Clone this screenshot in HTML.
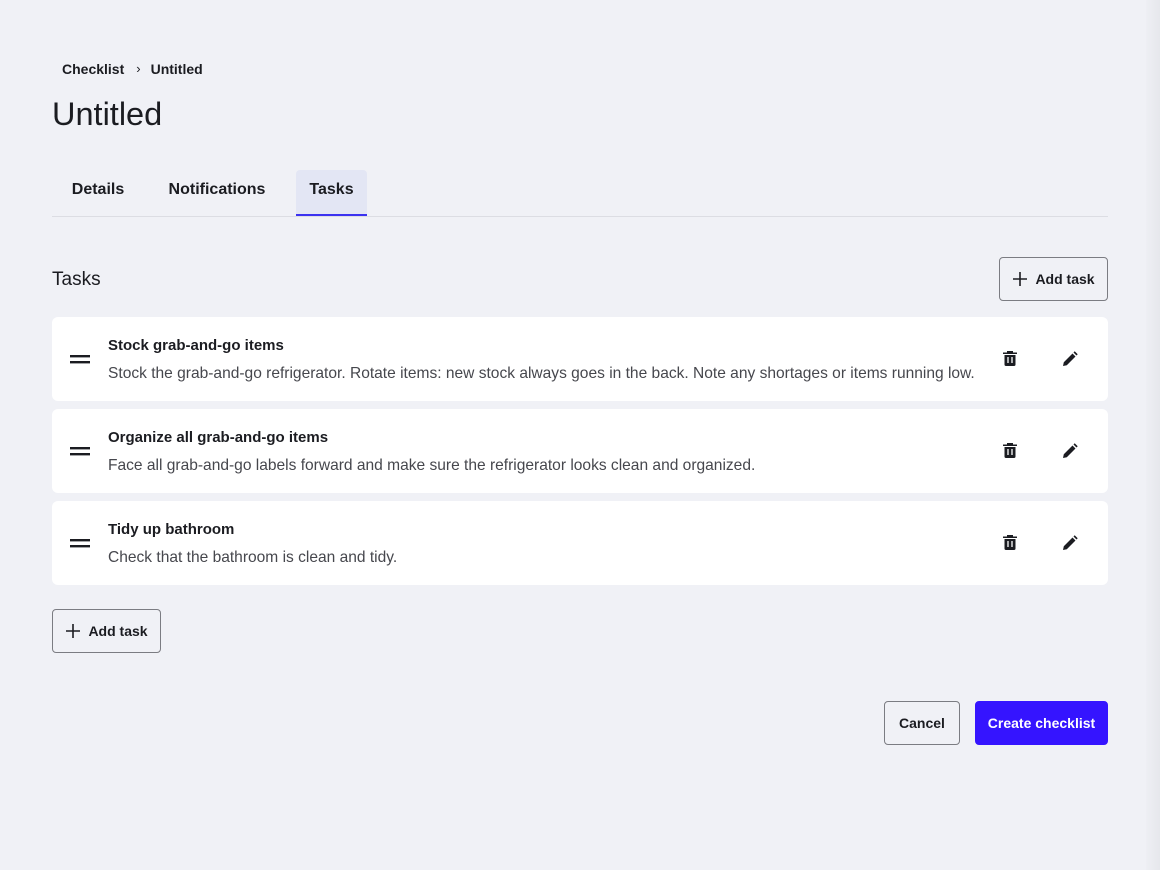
<!DOCTYPE html>
<html><head><meta charset="utf-8"><style>
*{box-sizing:border-box;margin:0;padding:0}
body{width:1160px;height:870px;background:#f0f1f6;font-family:"Liberation Sans",sans-serif;color:#1b1c21;position:relative;overflow:hidden}
.sb{position:absolute;right:0;top:0;width:14px;height:870px;background:linear-gradient(90deg,#eeeff4,#e6e7ec)}
.bc{position:absolute;left:62px;top:61px;font-size:14px;font-weight:bold;display:flex;gap:0}
.bc span.s{margin:0 10px 0 12px;font-weight:normal;font-size:13px}
h1{position:absolute;left:52px;top:96px;font-size:32.5px;font-weight:normal}
.tabs{position:absolute;left:52px;top:170px;width:1056px;height:47px;border-bottom:1px solid #dcdde3}
.tab{position:absolute;top:0;height:46px;line-height:40px;font-size:16px;font-weight:bold;text-align:center}
.tab.a{background:#e3e6f4;border-radius:4px 4px 0 0;border-bottom:2px solid #3b32f0}
.h2{position:absolute;left:52px;top:269px;font-size:19px}
.btn{position:absolute;border:1px solid #7b7c82;border-radius:4px;background:transparent;font-size:14px;font-weight:bold;display:flex;align-items:center;justify-content:center;gap:7px}
.card{position:absolute;left:52px;width:1056px;height:84px;background:#fff;border-radius:6px}
.card .t{position:absolute;left:56px;top:20px;font-size:15px;font-weight:bold}
.card .d{position:absolute;left:56px;top:48px;font-size:15.55px;color:#46474d}
.card .h{position:absolute;left:18px;top:36px}
.card .tr{position:absolute;left:951px;top:33px}
.card .pe{position:absolute;left:1010px;top:34px}
</style></head><body>
<div class="sb"></div>
<div class="bc"><span>Checklist</span><span class="s">›</span><span>Untitled</span></div>
<h1>Untitled</h1>
<div class="tabs">
<div class="tab" style="left:0;width:92px">Details</div>
<div class="tab" style="left:104px;width:122px">Notifications</div>
<div class="tab a" style="left:244px;width:71px">Tasks</div>
</div>
<div class="h2">Tasks</div>
<div class="btn" style="left:999px;top:257px;width:109px;height:44px"><svg width="16" height="16" viewBox="0 0 16 16"><path d="M8 1v14M1 8h14" stroke="#1b1c21" stroke-width="1.6"/></svg>Add task</div>

<div class="card" style="top:317px"><svg class="h" width="20" height="12"><rect y="2" width="20" height="2.4" fill="#1b1c21"/><rect y="8" width="20" height="2.4" fill="#1b1c21"/></svg><div class="t">Stock grab-and-go items</div><div class="d">Stock the grab-and-go refrigerator. Rotate items: new stock always goes in the back. Note any shortages or items running low.</div>
<svg class="tr" width="14" height="16" viewBox="0 0 14 16"><path d="M4 1h6v1.5h4V4H0V2.5h4z M1.5 5h11v9.5a1.5 1.5 0 0 1-1.5 1.5H3a1.5 1.5 0 0 1-1.5-1.5z" fill="#1b1c21"/><path d="M5 7v6M9 7v6" stroke="#fff" stroke-width="1.3"/></svg>
<svg class="pe" width="16" height="16" viewBox="0 0 16 16"><path d="M1 15l.8-3.8L10.5 2.5l3 3L4.8 14.2z M11.5 1.5l1.2-1.2 3 3-1.2 1.2z" fill="#1b1c21"/></svg></div>

<div class="card" style="top:409px"><svg class="h" width="20" height="12"><rect y="2" width="20" height="2.4" fill="#1b1c21"/><rect y="8" width="20" height="2.4" fill="#1b1c21"/></svg><div class="t">Organize all grab-and-go items</div><div class="d">Face all grab-and-go labels forward and make sure the refrigerator looks clean and organized.</div>
<svg class="tr" width="14" height="16" viewBox="0 0 14 16"><path d="M4 1h6v1.5h4V4H0V2.5h4z M1.5 5h11v9.5a1.5 1.5 0 0 1-1.5 1.5H3a1.5 1.5 0 0 1-1.5-1.5z" fill="#1b1c21"/><path d="M5 7v6M9 7v6" stroke="#fff" stroke-width="1.3"/></svg>
<svg class="pe" width="16" height="16" viewBox="0 0 16 16"><path d="M1 15l.8-3.8L10.5 2.5l3 3L4.8 14.2z M11.5 1.5l1.2-1.2 3 3-1.2 1.2z" fill="#1b1c21"/></svg></div>

<div class="card" style="top:501px"><svg class="h" width="20" height="12"><rect y="2" width="20" height="2.4" fill="#1b1c21"/><rect y="8" width="20" height="2.4" fill="#1b1c21"/></svg><div class="t">Tidy up bathroom</div><div class="d">Check that the bathroom is clean and tidy.</div>
<svg class="tr" width="14" height="16" viewBox="0 0 14 16"><path d="M4 1h6v1.5h4V4H0V2.5h4z M1.5 5h11v9.5a1.5 1.5 0 0 1-1.5 1.5H3a1.5 1.5 0 0 1-1.5-1.5z" fill="#1b1c21"/><path d="M5 7v6M9 7v6" stroke="#fff" stroke-width="1.3"/></svg>
<svg class="pe" width="16" height="16" viewBox="0 0 16 16"><path d="M1 15l.8-3.8L10.5 2.5l3 3L4.8 14.2z M11.5 1.5l1.2-1.2 3 3-1.2 1.2z" fill="#1b1c21"/></svg></div>

<div class="btn" style="left:52px;top:609px;width:109px;height:44px"><svg width="16" height="16" viewBox="0 0 16 16"><path d="M8 1v14M1 8h14" stroke="#1b1c21" stroke-width="1.6"/></svg>Add task</div>
<div class="btn" style="left:884px;top:701px;width:76px;height:44px">Cancel</div>
<div class="btn" style="left:975px;top:701px;width:133px;height:44px;background:#3514ff;border-color:#3514ff;color:#fff">Create checklist</div>
</body></html>
